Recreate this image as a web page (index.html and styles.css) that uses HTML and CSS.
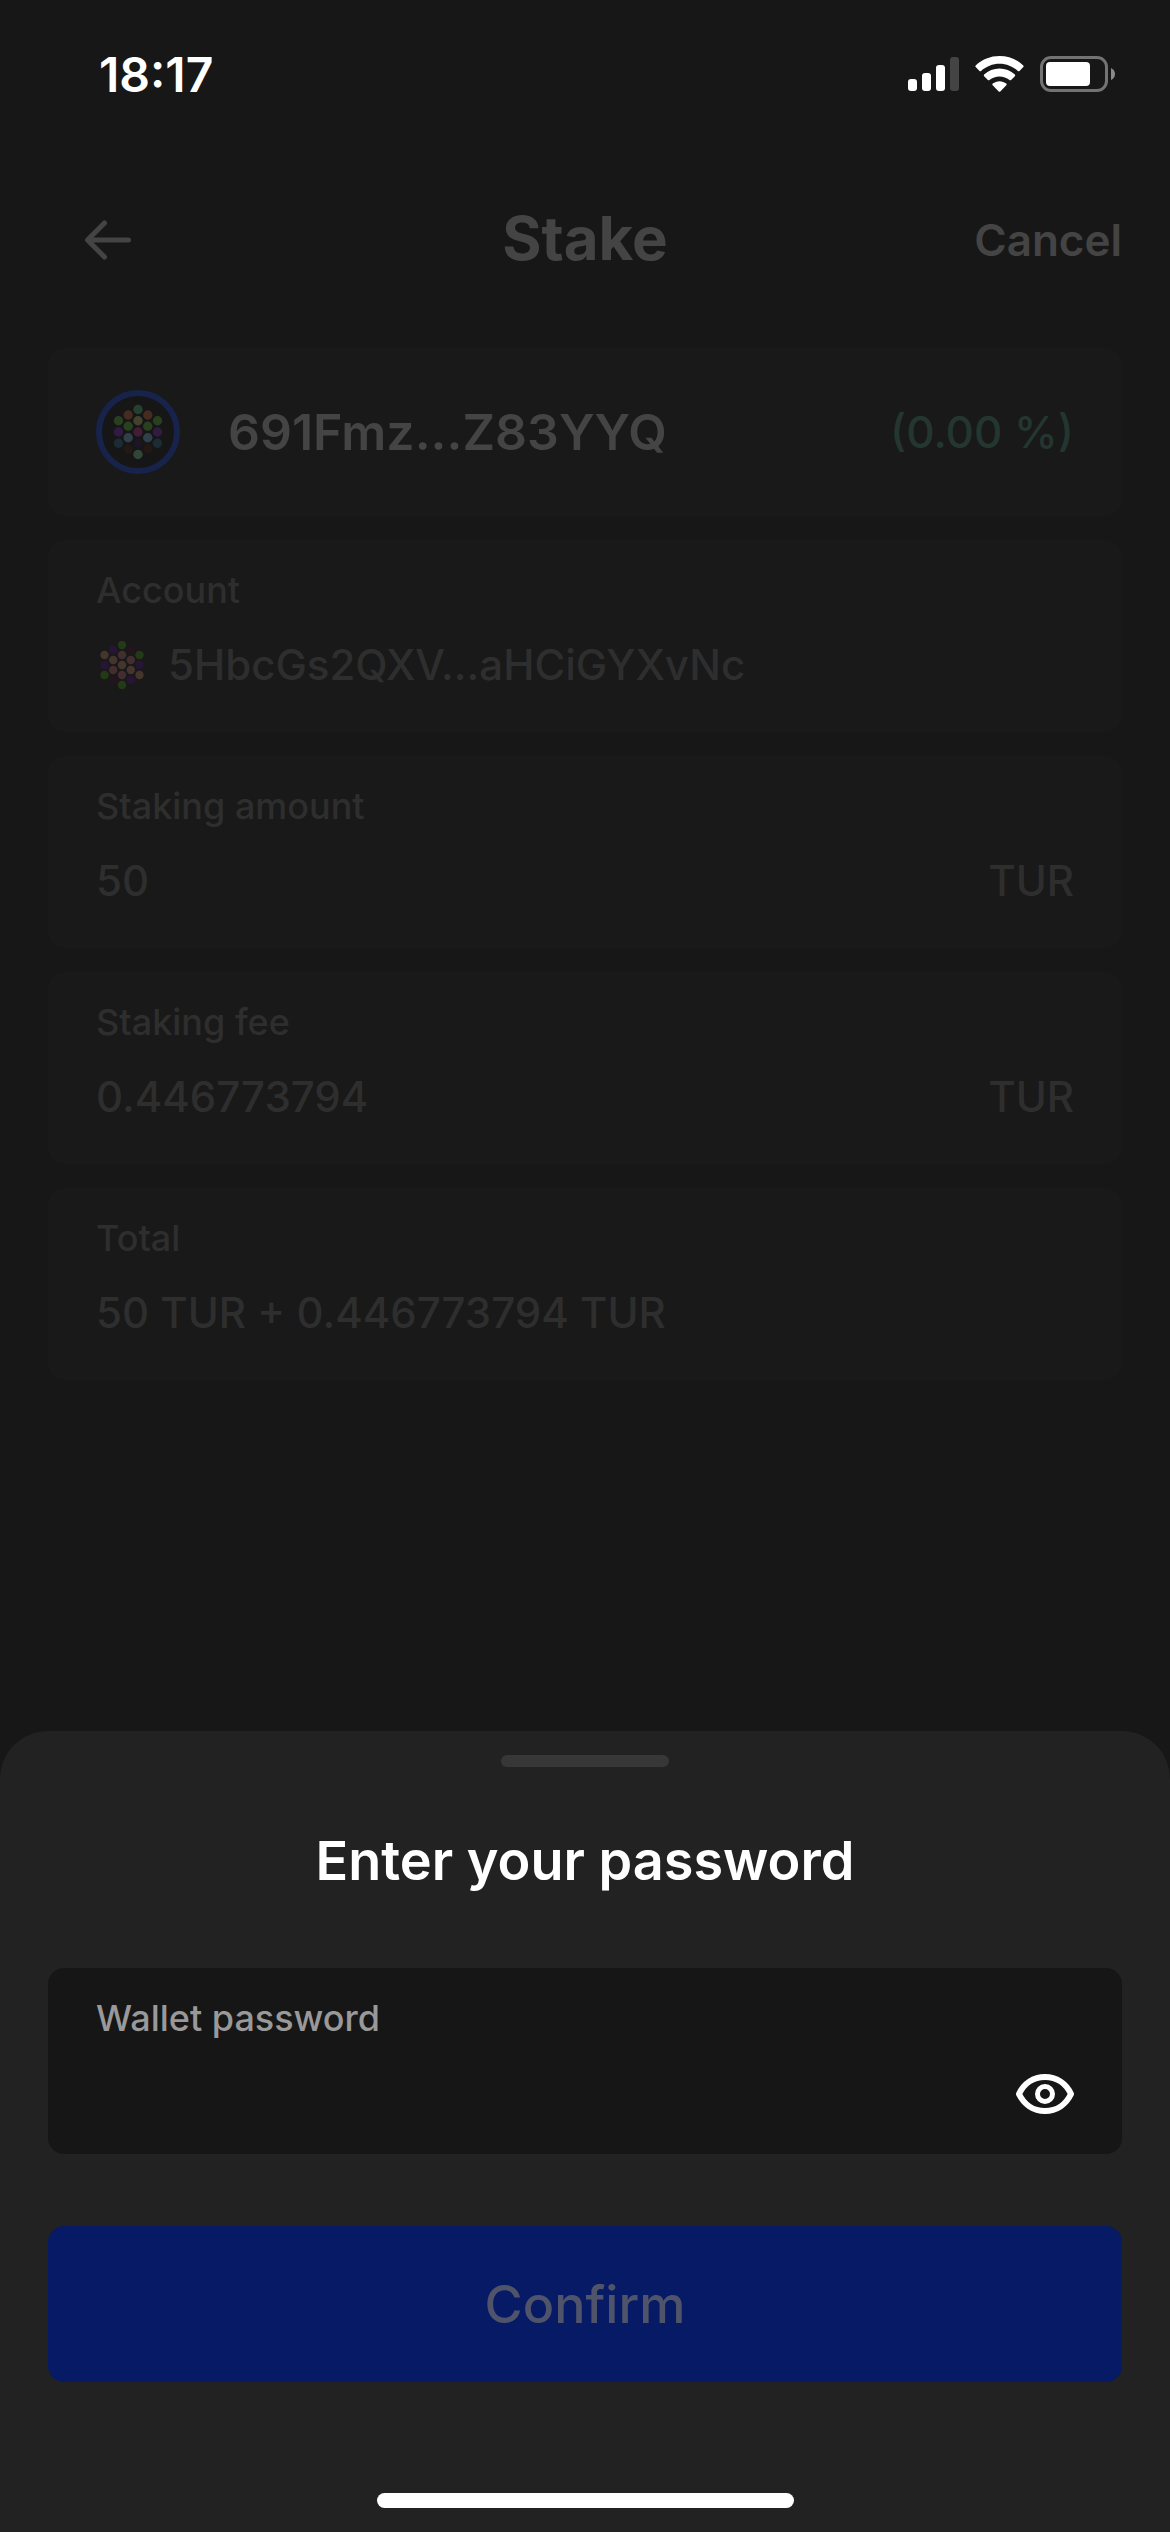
FILE: index.html
```html
<!DOCTYPE html>
<html lang="en">
<head>
<meta charset="utf-8">
<meta name="viewport" content="width=device-width, initial-scale=1">
<title>Stake</title>
<link rel="stylesheet" href="styles.css">
</head>
<body>
<div class="screen">
  <div class="status-bar">
    <span class="time">18:17</span>
    <div class="status-icons">
      <svg width="51" height="34" viewBox="0 0 51 34" fill="#fff" aria-hidden="true">
        <rect x="0" y="22" width="9" height="12" rx="3"/>
        <rect x="14" y="16" width="9" height="18" rx="3"/>
        <rect x="28" y="8" width="9" height="26" rx="3"/>
        <rect x="42" y="0" width="9" height="34" rx="3" fill="#444"/>
      </svg>
      <svg width="49" height="36" viewBox="0 0 49 36" fill="#fff" aria-hidden="true">
        <path d="M24.500 0C33.500 0 42 3.400 48.300 9.400Q49 10.200 48.300 11L44.500 15Q43.700 15.700 42.900 15C37.800 10.400 31.400 7.800 24.500 7.800S11.200 10.400 6.100 15Q5.300 15.700 4.500 15L.7 11Q0 10.200.7 9.400C7 3.400 15.500 0 24.500 0Z"/>
        <path d="M24.500 12.600C30.300 12.600 35.700 14.800 39.900 18.600Q40.600 19.400 39.900 20.200L36.100 24Q35.300 24.700 34.500 24C31.700 21.600 28.200 20.400 24.500 20.400S17.300 21.600 14.500 24Q13.700 24.700 12.900 24L9.100 20.200Q8.400 19.400 9.100 18.600C13.300 14.800 18.700 12.600 24.500 12.600Z"/>
        <path d="M24.500 25.200C27 25.200 29.400 26.100 31.300 27.600Q32 28.400 31.300 29.200L25.300 35.500Q24.500 36.200 23.700 35.500L17.700 29.200Q17 28.400 17.700 27.600C19.600 26.100 22 25.200 24.500 25.200Z"/>
      </svg>
      <svg class="battery" width="76" height="36" viewBox="0 0 76 36" aria-hidden="true">
        <rect x="1.500" y="1.500" width="65" height="33" rx="9.500" fill="none" stroke="#737373" stroke-width="3"/>
        <rect x="6" y="6" width="44" height="24" rx="4" fill="#fff"/>
        <path d="M71 12Q75 14 75 18T71 24Z" fill="#8b8b8b"/>
      </svg>
    </div>
  </div>

  <header class="nav">
    <button class="nav-back" type="button" aria-label="Back">
      <svg width="48" height="42" viewBox="0 0 48 42" fill="none" stroke="#444" stroke-width="5" stroke-linecap="round" stroke-linejoin="round" aria-hidden="true">
        <path d="M44.500 21H4M20.500 4L3.500 21L20.500 38"/>
      </svg>
    </button>
    <h1 class="nav-title">Stake</h1>
    <button class="nav-cancel" type="button">Cancel</button>
  </header>

  <main class="cards">
    <section class="card validator">
      <svg class="avatar" viewBox="0 0 84 84" aria-hidden="true">
        <circle cx="42" cy="42" r="39" fill="#161616" stroke="#17234a" stroke-width="6"/>
        <g>
          <circle cx="42" cy="19.500" r="4.700" fill="#25402f"/>
          <circle cx="32.200" cy="25" r="4.700" fill="#452b20"/>
          <circle cx="51.800" cy="25" r="4.700" fill="#452b20"/>
          <circle cx="22.500" cy="30.700" r="4.700" fill="#28401f"/>
          <circle cx="42" cy="30.700" r="4.700" fill="#43422e"/>
          <circle cx="61.500" cy="30.700" r="4.700" fill="#28401f"/>
          <circle cx="32.200" cy="36.300" r="4.700" fill="#28401f"/>
          <circle cx="51.800" cy="36.300" r="4.700" fill="#28401f"/>
          <circle cx="22.500" cy="42" r="4.700" fill="#321b43"/>
          <circle cx="42" cy="42" r="4.700" fill="#431c35"/>
          <circle cx="61.500" cy="42" r="4.700" fill="#321b43"/>
          <circle cx="32.200" cy="47.700" r="4.700" fill="#30404a"/>
          <circle cx="51.800" cy="47.700" r="4.700" fill="#30404a"/>
          <circle cx="22.500" cy="53.300" r="4.700" fill="#1c2c35"/>
          <circle cx="42" cy="53.300" r="4.700" fill="#1e1524"/>
          <circle cx="61.500" cy="53.300" r="4.700" fill="#1c2c35"/>
          <circle cx="32.200" cy="59" r="4.700" fill="#221815"/>
          <circle cx="51.800" cy="59" r="4.700" fill="#221815"/>
          <circle cx="42" cy="64.500" r="4.700" fill="#304637"/>
        </g>
      </svg>
      <h2 class="validator-name">691Fmz...Z83YYQ</h2>
      <span class="validator-rate">(0.00 %)</span>
    </section>

    <section class="card field">
      <h3 class="label">Account</h3>
      <p class="value">
        <span class="account">
          <svg class="identicon" viewBox="0 0 48 48" aria-hidden="true">
            <circle cx="24" cy="4" r="4.200" fill="#243a17"/>
            <circle cx="15.200" cy="9" r="4.200" fill="#281536"/>
            <circle cx="32.800" cy="9" r="4.200" fill="#24151d"/>
            <circle cx="6.500" cy="14" r="4.200" fill="#44362c"/>
            <circle cx="24" cy="14" r="4.200" fill="#432d31"/>
            <circle cx="41.500" cy="14" r="4.200" fill="#243a17"/>
            <circle cx="15.200" cy="19" r="4.200" fill="#44362c"/>
            <circle cx="32.800" cy="19" r="4.200" fill="#432d31"/>
            <circle cx="6.500" cy="24" r="4.200" fill="#281536"/>
            <circle cx="24" cy="24" r="4.200" fill="#44362c"/>
            <circle cx="41.500" cy="24" r="4.200" fill="#281536"/>
            <circle cx="15.200" cy="29" r="4.200" fill="#432d31"/>
            <circle cx="32.800" cy="29" r="4.200" fill="#44362c"/>
            <circle cx="6.500" cy="34" r="4.200" fill="#243a17"/>
            <circle cx="24" cy="34" r="4.200" fill="#432d31"/>
            <circle cx="41.500" cy="34" r="4.200" fill="#44362c"/>
            <circle cx="15.200" cy="39" r="4.200" fill="#24151d"/>
            <circle cx="32.800" cy="39" r="4.200" fill="#281536"/>
            <circle cx="24" cy="44" r="4.200" fill="#243a17"/>
          </svg>
          5HbcGs2QXV...aHCiGYXvNc
        </span>
      </p>
    </section>

    <section class="card field">
      <h3 class="label">Staking amount</h3>
      <p class="value"><span>50</span><span>TUR</span></p>
    </section>

    <section class="card field">
      <h3 class="label">Staking fee</h3>
      <p class="value"><span>0.446773794</span><span>TUR</span></p>
    </section>

    <section class="card field">
      <h3 class="label">Total</h3>
      <p class="value">50 TUR + 0.446773794 TUR</p>
    </section>
  </main>

  <form class="sheet">
    <div class="handle"></div>
    <h2 class="sheet-title">Enter your password</h2>
    <div class="password">
      <label class="label" for="password">Wallet password</label>
      <div class="password-row">
        <input class="password-input" id="password" type="password" autocomplete="current-password">
        <button class="reveal" type="button" aria-label="Show password">
          <svg width="58" height="40" viewBox="0 0 58 40" fill="none" stroke="#fff" stroke-width="6" stroke-linejoin="round" aria-hidden="true">
            <path d="M3 20C8 9.500 17.500 3 29 3S50 9.500 55 20C50 30.500 40.500 37 29 37S8 30.500 3 20Z"/>
            <circle cx="29" cy="20" r="7.500" stroke-width="5"/>
          </svg>
        </button>
      </div>
    </div>
    <button class="confirm" type="submit" disabled>Confirm</button>
    <div class="home-indicator"></div>
  </form>
</div>
</body>
</html>
```
FILE: styles.css
```css
*,
*::before,
*::after {
  box-sizing: border-box;
}

body,
h1,
h2,
h3,
p {
  margin: 0;
}

body {
  background: #171717;
  color: #2e2e2e;
  font-family: Inter, "Liberation Sans", sans-serif;
  font-weight: 500;
}

button,
input {
  padding: 0;
  border: 0;
  background: none;
  color: inherit;
  font: inherit;
}

svg {
  display: block;
  flex: none;
}

.screen {
  display: flex;
  flex-direction: column;
  min-height: 100vh;
}

.status-bar {
  display: flex;
  align-items: center;
  justify-content: space-between;
  height: 148px;
  padding: 0 54px 0 99px;
  color: #fff;
}

.time {
  font-size: 48px;
  font-weight: 600;
}

.status-icons {
  display: flex;
  align-items: center;
  gap: 16px;
}

.nav {
  display: grid;
  grid-template-columns: 1fr auto 1fr;
  align-items: center;
  height: 184px;
  padding: 0 48px;
  color: #444;
}

.nav-back {
  justify-self: start;
  padding: 12px 36px;
}

.nav-title {
  padding-bottom: 4px;
  font-size: 60px;
  font-weight: 700;
}

.nav-cancel {
  justify-self: end;
  font-size: 44px;
  font-weight: 600;
}

.cards {
  display: flex;
  flex-direction: column;
  gap: 24px;
  padding: 16px 48px 48px;
}

.card {
  padding: 34px 48px;
  border-radius: 16px;
  background: #191919;
}

.validator {
  display: flex;
  align-items: center;
  gap: 48px;
  min-height: 168px;
}

.avatar {
  width: 84px;
  height: 84px;
}

.validator-name {
  flex: 1;
  color: #444;
  font-size: 50px;
  font-weight: 600;
}

.validator-rate {
  color: #243630;
  font-size: 44px;
}

.field {
  min-height: 192px;
}

.label {
  display: block;
  font-size: 36px;
  font-weight: 500;
  line-height: 32px;
}

.value {
  display: flex;
  justify-content: space-between;
  margin-top: 31px;
  font-size: 42px;
  line-height: 56px;
}

.account {
  display: flex;
  align-items: center;
  gap: 22px;
  padding-left: 2px;
}

.identicon {
  width: 48px;
  height: 48px;
}

.sheet {
  display: flex;
  flex-direction: column;
  margin-top: auto;
  padding: 24px 48px;
  border-radius: 48px 48px 0 0;
  background: #222;
}

.handle {
  align-self: center;
  width: 168px;
  height: 12px;
  border-radius: 6px;
  background: #373737;
}

.sheet-title {
  margin-top: 58px;
  color: #fff;
  font-size: 54px;
  font-weight: 600;
  line-height: 72px;
  text-align: center;
}

.password {
  margin-top: 71px;
  padding: 34px 48px;
  border-radius: 16px;
  background: #161616;
  color: #999;
}

.password-row {
  display: flex;
  align-items: center;
  margin-top: 34px;
}

.password-input {
  flex: 1;
  min-width: 0;
  height: 52px;
  outline: 0;
  color: #fff;
  font-size: 44px;
}

.confirm {
  height: 156px;
  margin-top: 72px;
  border-radius: 16px;
  background: #061a66;
  color: #50546a;
  font-size: 52px;
  font-weight: 500;
}

.home-indicator {
  align-self: center;
  width: 417px;
  height: 15px;
  margin-top: 111px;
  border-radius: 8px;
  background: #fff;
}
```
